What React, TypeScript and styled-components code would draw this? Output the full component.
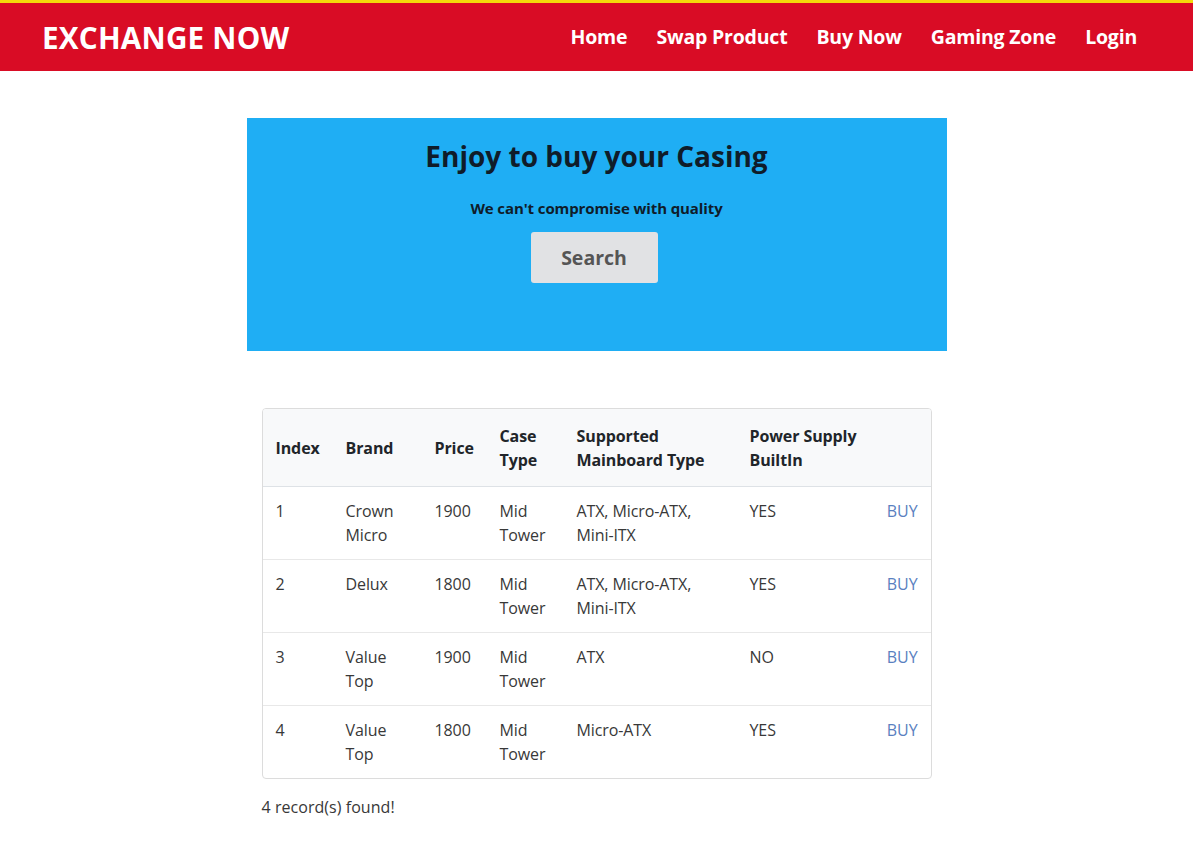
import React from "react";
import styled, { createGlobalStyle } from "styled-components";

const Global = createGlobalStyle`
  html, body { margin: 0; padding: 0; background: #fff; }
  body { font-family: "Open Sans", "Liberation Sans", sans-serif; color: #333; }
  * { box-sizing: border-box; }
`;

const NavBar = styled.header`
  border-top: 3px solid #f4d90b;
  background: #d90c25;
  height: 71px;
  display: flex;
  align-items: center;
  justify-content: space-between;
  padding: 0 56px 2px 42px;
`;

const Logo = styled.div`
  color: #fff;
  font-weight: 700;
  font-size: 29.7px;
  letter-spacing: 0.2px;
  margin-top: 2px;
`;

const NavLinks = styled.nav`
  display: flex;
  gap: 29px;
`;

const NavLink = styled.a`
  color: #fff;
  font-weight: 700;
  font-size: 19.5px;
  text-decoration: none;
  letter-spacing: -0.2px;
`;

const Main = styled.main`
  width: 700px;
  margin: 47px auto 0;
  display: flex;
  flex-direction: column;
  align-items: center;
`;

const Hero = styled.section`
  width: 700px;
  height: 233px;
  background: #1faef4;
  display: flex;
  flex-direction: column;
  align-items: center;
  padding-top: 19px;
`;

const HeroTitle = styled.h1`
  margin: 0;
  font-size: 28px;
  font-weight: 700;
  color: #0f1c2a;
  line-height: 38px;
`;

const HeroSub = styled.p`
  margin: 23px 0 0;
  font-size: 15px;
  font-weight: 700;
  color: #0f1c2a;
  line-height: 20px;
  letter-spacing: -0.1px;
`;

const SearchButton = styled.button`
  margin: 14px 5px 0 0;
  width: 127px;
  height: 51px;
  border: none;
  border-radius: 3px;
  background: #e1e2e4;
  color: #555;
  font-family: inherit;
  font-weight: 700;
  font-size: 19.5px;
`;

const TableWrap = styled.div`
  margin-top: 57px;
  width: 670px;
  border: 1px solid #dcdcdc;
  border-radius: 4px;
  overflow: hidden;
`;

const Table = styled.table`
  width: 100%;
  border-collapse: collapse;
  table-layout: fixed;
  font-size: 16px;
  line-height: 24px;
`;

const Th = styled.th<{ $w?: number }>`
  width: ${(p) => (p.$w ? `${p.$w}px` : "auto")};
  text-align: left;
  font-weight: 700;
  color: #212529;
  background: #f8f9fa;
  padding: 15px 13px 14px 13px;
  vertical-align: middle;
  border-bottom: 1px solid #dee2e6;
  letter-spacing: -0.1px;
`;

const Td = styled.td<{ $right?: boolean }>`
  padding: 12px 13px 12px;
  vertical-align: top;
  color: #383838;
  text-align: ${(p) => (p.$right ? "right" : "left")};
  border-top: 1px solid #e8e8e8;
  letter-spacing: -0.1px;
`;

const Row = styled.tr`
  &:first-child td { border-top: none; }
`;

const BuyLink = styled.a`
  color: #5a80c0;
  text-decoration: none;
`;

const Footer = styled.p`
  align-self: flex-start;
  margin: 17px 0 0 15px;
  font-size: 16px;
  color: #383838;
  letter-spacing: 0.05px;
`;

const rows = [
  ["1", "Crown Micro", "1900", "Mid Tower", "ATX, Micro-ATX, Mini-ITX", "YES"],
  ["2", "Delux", "1800", "Mid Tower", "ATX, Micro-ATX, Mini-ITX", "YES"],
  ["3", "Value Top", "1900", "Mid Tower", "ATX", "NO"],
  ["4", "Value Top", "1800", "Mid Tower", "Micro-ATX", "YES"],
];

export default function App() {
  return (
    <>
      <Global />
      <NavBar>
        <Logo>EXCHANGE NOW</Logo>
        <NavLinks>
          <NavLink href="#">Home</NavLink>
          <NavLink href="#">Swap Product</NavLink>
          <NavLink href="#">Buy Now</NavLink>
          <NavLink href="#">Gaming Zone</NavLink>
          <NavLink href="#">Login</NavLink>
        </NavLinks>
      </NavBar>
      <Main>
        <Hero>
          <HeroTitle>Enjoy to buy your Casing</HeroTitle>
          <HeroSub>We can't compromise with quality</HeroSub>
          <SearchButton>Search</SearchButton>
        </Hero>
        <TableWrap>
          <Table>
            <thead>
              <tr>
                <Th $w={70}>Index</Th>
                <Th $w={89}>Brand</Th>
                <Th $w={65}>Price</Th>
                <Th $w={77}>Case Type</Th>
                <Th $w={173}>Supported Mainboard Type</Th>
                <Th $w={137}>Power Supply BuiltIn</Th>
                <Th></Th>
              </tr>
            </thead>
            <tbody>
              {rows.map((r) => (
                <Row key={r[0]}>
                  {r.map((c, i) => (
                    <Td key={i}>{c}</Td>
                  ))}
                  <Td $right>
                    <BuyLink href="#">BUY</BuyLink>
                  </Td>
                </Row>
              ))}
            </tbody>
          </Table>
        </TableWrap>
        <Footer>4 record(s) found!</Footer>
      </Main>
    </>
  );
}
